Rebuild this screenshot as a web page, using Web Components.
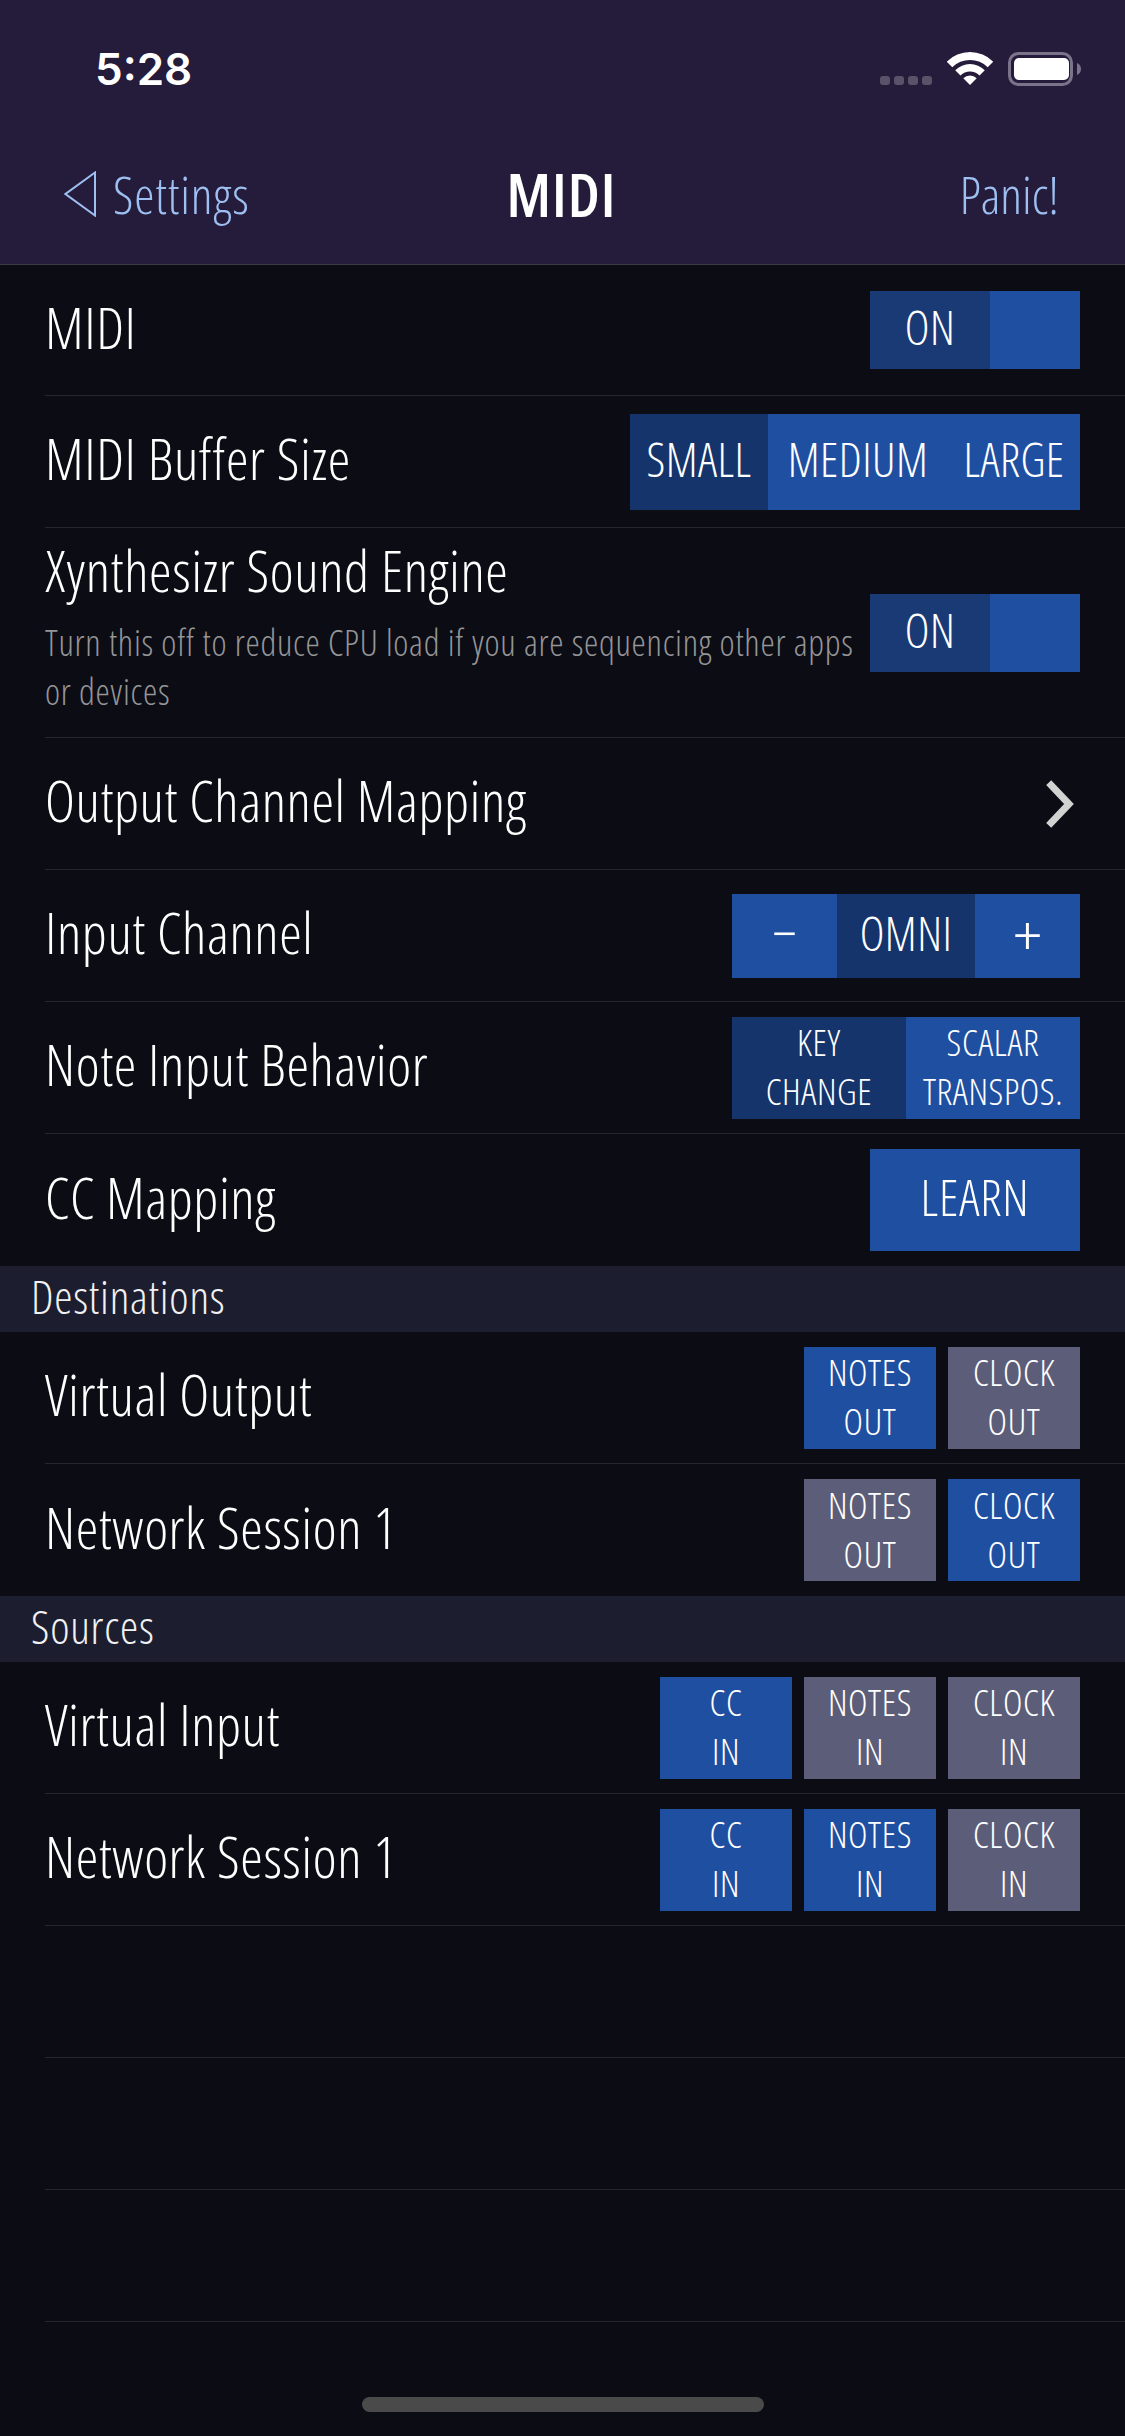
<!doctype html>
<html>
<head>
<meta charset="utf-8">
<title>MIDI</title>
<style>
  html, body { margin: 0; background: #0b0c14; }
  body { width: 1125px; height: 2436px; position: relative; overflow: hidden; color: #fff;
    font-family: "Open Sans", "Liberation Sans", sans-serif; font-weight: 300; font-stretch: 75%; }
</style>
</head>
<body>
<status-bar></status-bar>
<nav-bar back="Settings" title="MIDI" action="Panic!"></nav-bar>

<set-row label="MIDI" style="--h:131px">
  <seg-group>
    <seg-btn tone="toggle" w="120" h="78">ON</seg-btn>
    <seg-btn w="90" h="78"></seg-btn>
  </seg-group>
</set-row>
<set-row label="MIDI Buffer Size">
  <seg-group>
    <seg-btn tone="dark" w="138" h="96">SMALL</seg-btn>
    <seg-btn w="180" h="96">MEDIUM</seg-btn>
    <seg-btn w="132" h="96">LARGE</seg-btn>
  </seg-group>
</set-row>
<set-row label="Xynthesizr Sound Engine" sub="Turn this off to reduce CPU load if you are sequencing other apps or devices" style="--h:210px">
  <seg-group>
    <seg-btn tone="toggle" w="120" h="78">ON</seg-btn>
    <seg-btn w="90" h="78"></seg-btn>
  </seg-group>
</set-row>
<set-row label="Output Channel Mapping">
  <svg width="36" height="48" viewBox="0 0 36 48"><path d="M4.700 2.700 L25 24 L4.700 45.300" fill="none" stroke="#cfd3d1" stroke-width="7"/></svg>
</set-row>
<set-row label="Input Channel">
  <seg-group>
    <seg-btn size="sign" w="105" h="84">&#8722;</seg-btn>
    <seg-btn tone="dark" w="138" h="84">OMNI</seg-btn>
    <seg-btn size="sign" w="105" h="84">+</seg-btn>
  </seg-group>
</set-row>
<set-row label="Note Input Behavior">
  <seg-group>
    <seg-btn tone="dark" size="small" w="174" h="102">KEY<br>CHANGE</seg-btn>
    <seg-btn size="small" w="174" h="102">SCALAR<br>TRANSPOS.</seg-btn>
  </seg-group>
</set-row>
<set-row label="CC Mapping" last>
  <seg-btn size="large" w="210" h="102">LEARN</seg-btn>
</set-row>

<sec-head>Destinations</sec-head>
<set-row label="Virtual Output">
  <seg-group gap>
    <seg-btn size="small" w="132" h="102">NOTES<br>OUT</seg-btn>
    <seg-btn tone="off" size="small" w="132" h="102">CLOCK<br>OUT</seg-btn>
  </seg-group>
</set-row>
<set-row label="Network Session 1" last>
  <seg-group gap>
    <seg-btn tone="off" size="small" w="132" h="102">NOTES<br>OUT</seg-btn>
    <seg-btn size="small" w="132" h="102">CLOCK<br>OUT</seg-btn>
  </seg-group>
</set-row>

<sec-head>Sources</sec-head>
<set-row label="Virtual Input">
  <seg-group gap>
    <seg-btn size="small" w="132" h="102">CC<br>IN</seg-btn>
    <seg-btn tone="off" size="small" w="132" h="102">NOTES<br>IN</seg-btn>
    <seg-btn tone="off" size="small" w="132" h="102">CLOCK<br>IN</seg-btn>
  </seg-group>
</set-row>
<set-row label="Network Session 1">
  <seg-group gap>
    <seg-btn size="small" w="132" h="102">CC<br>IN</seg-btn>
    <seg-btn size="small" w="132" h="102">NOTES<br>IN</seg-btn>
    <seg-btn tone="off" size="small" w="132" h="102">CLOCK<br>IN</seg-btn>
  </seg-group>
</set-row>
<set-row></set-row>
<set-row></set-row>
<set-row></set-row>

<home-bar></home-bar>

<script>
// status-bar
class StatusBar extends HTMLElement {
  constructor(){
    super();
    this.attachShadow({ mode: 'open' }).innerHTML = `
    <style>
      :host { display: flex; align-items: flex-start; justify-content: space-between; height: 132px; background: #251b3a; box-sizing: border-box; padding: 46px 44px 0 95px; }
      .time { font: 600 44px/46px Inter, "Liberation Sans", sans-serif; color: #fff; letter-spacing: 0; }
      .icons { display: flex; align-items: flex-start; padding-top: 6px; }
      .dots { display: flex; gap: 4px; margin-top: 24px; margin-right: 15px; }
      .dots i { width: 10px; height: 9px; border-radius: 3px; background: #5b5169; }
      .wifi { margin-right: 15px; }
      .batt { display: block; }
    </style>
    <div class="time">5:28</div>
    <div class="icons">
      <div class="dots"><i></i><i></i><i></i><i></i></div>
      <svg class="wifi" width="46" height="33" viewBox="0 0 46 33" fill="#fff">
        <path d="M-.3 9.700A33 33 0 0 1 46.300 9.700L40.700 15.300A25 25 0 0 0 5.300 15.300Z"/>
        <path d="M8.200 18.200A21 21 0 0 1 37.800 18.200L32.500 23.500A13.500 13.500 0 0 0 13.500 23.500Z"/>
        <path d="M16.300 26.300A9.500 9.500 0 0 1 29.700 26.300L23 33Z"/>
      </svg>
      <svg class="batt" width="73" height="34" viewBox="0 0 73 34">
        <rect x="1.500" y="1.500" width="62" height="31" rx="9" fill="none" stroke="#7b7389" stroke-width="3"/>
        <rect x="6" y="6" width="55" height="22" rx="5" fill="#fff"/>
        <path d="M69 11C71.500 12 73 14 73 17S71.500 22 69 23Z" fill="#7b7389"/>
      </svg>
    </div>`;
  }
}
customElements.define('status-bar', StatusBar);

// nav-bar
class NavBar extends HTMLElement {
  constructor(){
    super();
    this.attachShadow({ mode: 'open' }).innerHTML = `
    <style>
      :host { display: grid; grid-template-columns: 1fr auto 1fr; align-items: center; height: 133px; box-sizing: border-box; padding: 0 66px 8px 64px; background: #251b3a; border-bottom: 1px solid #3b3a40; }
      .back { display: flex; align-items: center; gap: 17px; }
      .link { font-size: 51px; line-height: 60px; color: #9dbff1; font-weight: 300; letter-spacing: .9px; }
      .title { font-size: 60px; line-height: 60px; font-weight: 600; letter-spacing: 1px; color: #fff; }
      .right { text-align: right; letter-spacing: 0; }
      svg { display: block; }
    </style>
    <div class="back">
      <svg width="32" height="46" viewBox="0 0 32 46"><path d="M31 1.500 L1.500 23 L31 44.500 Z" fill="none" stroke="#9dbff1" stroke-width="2"/></svg>
      <span class="link" id="b"></span>
    </div>
    <div class="title" id="t"></div>
    <div class="link right" id="a"></div>`;
  }
  connectedCallback(){
    this.shadowRoot.getElementById('b').textContent = this.getAttribute('back');
    this.shadowRoot.getElementById('t').textContent = this.getAttribute('title');
    this.shadowRoot.getElementById('a').textContent = this.getAttribute('action');
  }
}
customElements.define('nav-bar', NavBar);

// set-row
class SetRow extends HTMLElement {
  constructor(){
    super();
    this.attachShadow({ mode: 'open' }).innerHTML = `
    <style>
      :host { display: block; padding-left: 45px; background: #0b0c14; }
      .row { display: flex; align-items: center; justify-content: space-between; gap: 12px; height: var(--h, 132px); box-sizing: border-box; padding-right: 45px; border-bottom: 1px solid #26272c; }
      :host([last]) .row { border-bottom: 0; }
      .text { flex: 1; min-width: 0; }
      .label { font-size: 57px; line-height: 66px; letter-spacing: .6px; color: #fff; white-space: nowrap; margin-bottom: 7px; }
      .sub { font-size: 36px; line-height: 49px; letter-spacing: .75px; color: #959597; margin-top: 15px; padding-bottom: 12px; }
      .sub:empty { display: none; }
    </style>
    <div class="row">
      <div class="text"><div class="label" id="l"></div><div class="sub" id="s"></div></div>
      <slot></slot>
    </div>`;
  }
  connectedCallback(){
    this.shadowRoot.getElementById('l').textContent = this.getAttribute('label') || '';
    this.shadowRoot.getElementById('s').textContent = this.getAttribute('sub') || '';
  }
}
customElements.define('set-row', SetRow);

// sec-head
class SecHead extends HTMLElement {
  constructor(){
    super();
    this.attachShadow({ mode: 'open' }).innerHTML = `
    <style>
      :host { display: flex; align-items: center; height: 66px; box-sizing: border-box; padding: 0 0 6px 31px; background: #1c1e30; font-size: 46px; letter-spacing: .8px; color: #f1f1f3; }
    </style>
    <slot></slot>`;
  }
}
customElements.define('sec-head', SecHead);

// seg-group
class SegGroup extends HTMLElement {
  constructor(){
    super();
    this.attachShadow({ mode: 'open' }).innerHTML = `
    <style>
      :host { display: flex; flex: none; }
      :host([gap]) { gap: 12px; }
    </style>
    <slot></slot>`;
  }
}
customElements.define('seg-group', SegGroup);

// seg-btn
class SegBtn extends HTMLElement {
  constructor(){
    super();
    this.attachShadow({ mode: 'open' }).innerHTML = `
    <style>
      :host { display: flex; flex: none; align-items: center; justify-content: center; box-sizing: border-box; padding-bottom: 5px; text-align: center; background: #1f4fa1; color: #fff; font-size: 47px; line-height: 49px; font-weight: 300; letter-spacing: .5px; white-space: nowrap; }
      :host([tone="dark"]) { background: #15346b; }
      :host([tone="toggle"]) { background: #193a75; }
      :host([tone="off"]) { background: #5c5d78; }
      :host([size="small"]) { font-size: 37px; letter-spacing: .6px; padding-bottom: 3px; }
      :host([size="large"]) { font-size: 50px; letter-spacing: .8px; }
      :host([size="sign"]) { font-family: Roboto, "Liberation Sans", sans-serif; font-weight: 300; font-stretch: 100%; font-size: 50px; letter-spacing: 0; padding-bottom: 0; }
    </style>
    <slot></slot>`;
  }
  connectedCallback(){
    this.style.width = this.getAttribute('w') + 'px';
    this.style.height = this.getAttribute('h') + 'px';
  }
}
customElements.define('seg-btn', SegBtn);

// home-bar
class HomeBar extends HTMLElement {
  constructor(){
    super();
    this.attachShadow({ mode: 'open' }).innerHTML = `
    <style>
      :host { position: absolute; left: 362px; top: 2397px; width: 402px; height: 15px; border-radius: 8px; background: #4a4a4a; }
    </style>`;
  }
}
customElements.define('home-bar', HomeBar);
</script>
</body>
</html>
